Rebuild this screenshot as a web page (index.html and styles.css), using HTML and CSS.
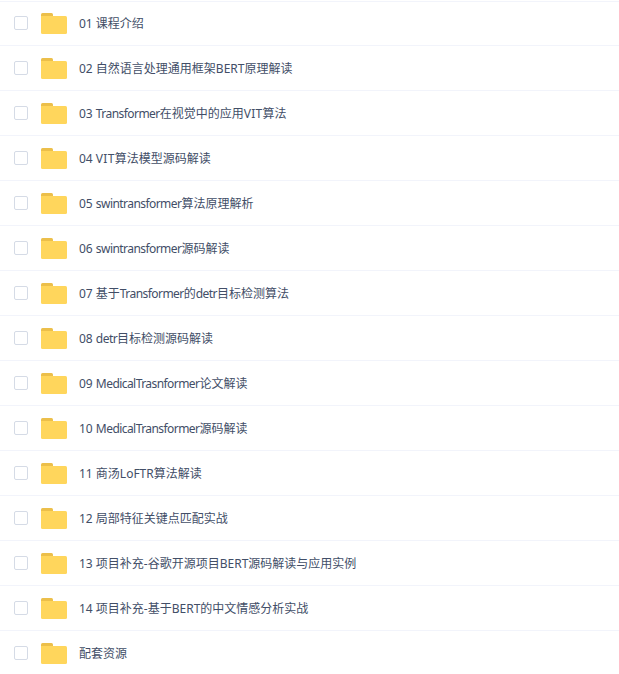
FILE: index.html
```html
<!DOCTYPE html>
<html lang="zh-CN">
<head>
<meta charset="utf-8">
<title>课程文件</title>
<link rel="stylesheet" href="styles.css">
</head>
<body>
<ul class="file-list" id="files"></ul>
<script src="app.js"></script>
</body>
</html>
```
FILE: styles.css
```css
body {
  margin: 0;
  background: #fff;
  color: #424e67;
  font: 12px/18px "Noto Sans", "Noto Sans CJK SC", sans-serif;
  overflow: hidden;
}
.file-list {
  margin: 0;
  padding: 1px 0 0;
  list-style: none;
}
.file-row {
  display: flex;
  align-items: center;
  box-sizing: border-box;
  height: 45px;
  padding-left: 14px;
  border-bottom: 1px solid #f2f4fb;
}
.file-row:first-child {
  box-shadow: inset 0 1px #f2f4fb;
}
.file-row:last-child {
  border-bottom-color: transparent;
}
.checkbox {
  box-sizing: border-box;
  width: 14px;
  height: 14px;
  margin: 0 13px 0 0;
  appearance: none;
  border: 1px solid #d5dbe6;
  border-radius: 2px;
  background: #fff;
}
.folder {
  display: block;
  width: 26px;
  height: 21px;
  margin-right: 12px;
}
.name {
  padding-top: 2px;
  white-space: pre;
}
.word {
  letter-spacing: -0.56px;
}
.acronym {
  letter-spacing: 0.3px;
}
```
FILE: app.js
```js
const names = [
  "01 课程介绍",
  "02 自然语言处理通用框架BERT原理解读",
  "03 Transformer在视觉中的应用VIT算法",
  "04 VIT算法模型源码解读",
  "05 swintransformer算法原理解析",
  "06 swintransformer源码解读",
  "07 基于Transformer的detr目标检测算法",
  "08 detr目标检测源码解读",
  "09 MedicalTrasnformer论文解读",
  "10 MedicalTransformer源码解读",
  "11 商汤LoFTR算法解读",
  "12 局部特征关键点匹配实战",
  "13 项目补充-谷歌开源项目BERT源码解读与应用实例",
  "14 项目补充-基于BERT的中文情感分析实战",
  "配套资源"
];
// Long Latin words are set tighter than the surrounding text.
const format = name => name
  .replace(/[A-Za-z]*[a-z]{3,}/g, '<span class="word">$&</span>')
  .replace(/VIT/g, '<span class="acronym">$&</span>');

document.getElementById("files").innerHTML = names.map(name => `
  <li class="file-row">
    <input class="checkbox" type="checkbox">
    <svg class="folder" viewBox="0 0 26 21">
      <path fill="#ecbf4a" d="M0 5V1.500Q0 0 1.500 0H10.500Q12 0 12 1.500V5Z"/>
      <path fill="#ffd65c" d="M0 3H24.500Q26 3 26 4.500V19.500Q26 21 24.500 21H1.500Q0 21 0 19.500Z"/>
    </svg>
    <span class="name">${format(name)}</span>
  </li>`).join("");
```
